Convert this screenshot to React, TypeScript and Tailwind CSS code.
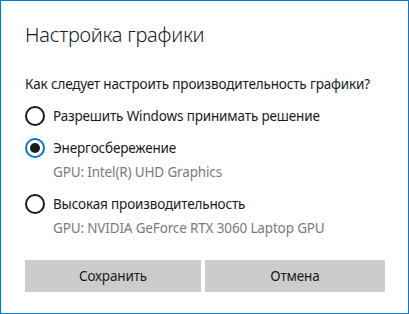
import { useState } from "react";

const options = [
  { id: "auto", label: "Разрешить Windows принимать решение", gpu: "" },
  { id: "power", label: "Энергосбережение", gpu: "GPU: Intel(R) UHD Graphics" },
  { id: "perf", label: "Высокая производительность", gpu: "GPU: NVIDIA GeForce RTX 3060 Laptop GPU" },
];

function Radio({ checked }: { checked: boolean }) {
  return (
    <span
      className={
        checked
          ? "flex h-[20px] w-[20px] shrink-0 items-center justify-center rounded-full border-2 border-[#0078d7]"
          : "flex h-[20px] w-[20px] shrink-0 items-center justify-center rounded-full border-2 border-[#1a1a1a]"
      }
    >
      {checked && <span className="h-[10px] w-[10px] rounded-full bg-[#1a1a1a]" />}
    </span>
  );
}

export default function App() {
  const [value, setValue] = useState("power");

  return (
    <div
      className="flex h-[314px] w-[409px] flex-col border border-[#0078d7] bg-white pl-[24px] text-[13.5px] tracking-[-0.15px] text-[#1a1a1a]"
      style={{ fontFamily: '"Noto Sans", "Open Sans", sans-serif' }}
    >
      <h1 className="mt-[20px] h-[28px] text-[20px] leading-[28px] font-light tracking-[-0.25px]">
        Настройка графики
      </h1>

      <p className="mt-[25px] h-[20px] leading-[20px]">Как следует настроить производительность графики?</p>

      <div className="mt-[6px] flex flex-col">
        {options.map((o, i) => (
          <div key={o.id} className={i === 2 ? "mt-[8px] flex flex-col" : "flex flex-col"}>
            <button onClick={() => setValue(o.id)} className="flex h-[32px] items-center gap-[8px] text-left">
              <Radio checked={value === o.id} />
              <span>{o.label}</span>
            </button>
            {o.gpu && <div className="h-[16px] pl-[28px] leading-[16px] text-[#7a7a7a]">{o.gpu}</div>}
          </div>
        ))}
      </div>

      <div className="mt-[24px] flex gap-[4px]">
        <button className="h-[32px] w-[176px] bg-[#cccccc]">Сохранить</button>
        <button className="h-[32px] w-[180px] bg-[#cccccc]">Отмена</button>
      </div>
    </div>
  );
}
